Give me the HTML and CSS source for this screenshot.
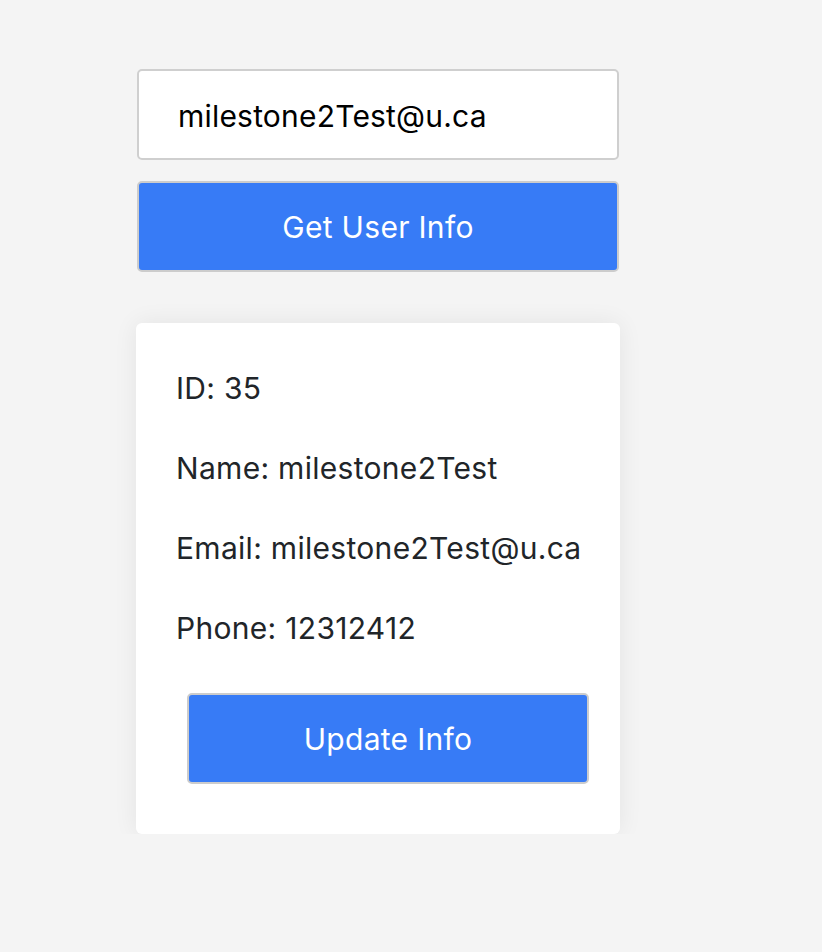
FILE: index.html
```html
<!DOCTYPE html>
<html>
<head>
<meta charset="utf-8">
<link rel="stylesheet" href="styles.css">
</head>
<body>
<main class="wrap">
  <input class="email" type="text" value="milestone2Test@u.ca">
  <button class="btn btn-wide">Get User Info</button>
  <section class="card">
    <p class="line">ID: 35</p>
    <p class="line">Name: milestone2Test</p>
    <p class="line">Email: milestone2Test@u.ca</p>
    <p class="line">Phone: 12312412</p>
    <button class="btn btn-update">Update Info</button>
  </section>
</main>
</body>
</html>
```
FILE: styles.css
```css
html, body {
  margin: 0;
  padding: 0;
  background: #f4f4f4;
}
body {
  font-family: Inter, "Noto Sans", sans-serif;
}
.wrap {
  display: flex;
  flex-direction: column;
  width: 484px;
  margin-left: 136px;
  padding-top: 69px;
}
.email {
  box-sizing: border-box;
  width: 482px;
  height: 91px;
  margin-left: 1px;
  border: 2px solid #cfcfcf;
  border-radius: 5px;
  background: #fff;
  padding: 2px 0 0 39px;
  font-family: Inter, "Noto Sans", sans-serif;
  font-size: 30px;
  letter-spacing: 0.2px;
  color: #000;
  outline: none;
}
.btn {
  box-sizing: border-box;
  height: 91px;
  border: 2px solid #cccccc;
  border-radius: 5px;
  background: #377bf6;
  color: #fff;
  font-family: Inter, "Noto Sans", sans-serif;
  font-size: 30px;
  letter-spacing: 0.3px;
  cursor: pointer;
}
.btn-wide {
  width: 482px;
  margin-left: 1px;
  margin-top: 21px;
}
.card {
  box-sizing: border-box;
  margin-top: 51px;
  width: 484px;
  height: 511px;
  background: #fff;
  border-radius: 6px;
  box-shadow: 0 0 24px rgba(0, 0, 0, 0.07);
  padding: 45px 40px 0 40px;
  display: flex;
  flex-direction: column;
}
.line {
  margin: 0 0 40px 0;
  font-size: 30px;
  letter-spacing: 0.3px;
  line-height: 40px;
  color: #212529;
  white-space: nowrap;
}
.line:nth-of-type(4) {
  margin-bottom: 45px;
}
.btn-update {
  width: 402px;
  margin-left: 11px;
}
```
